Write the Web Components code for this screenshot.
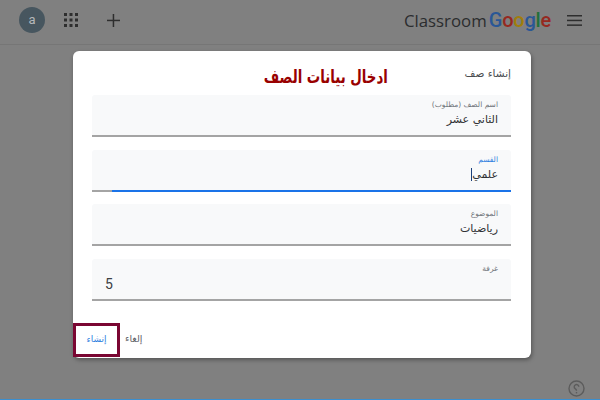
<!DOCTYPE html>
<html lang="ar">
<head>
<meta charset="utf-8">
<title>Classroom</title>
<style>
  html, body { margin: 0; height: 100%; }
  body { width: 600px; height: 400px; overflow: hidden; background: #808080; font-family: "DejaVu Sans", sans-serif; }
</style>
</head>
<body>
<class-page>
  <class-topbar slot="top"></class-topbar>
  <class-dialog heading="إنشاء صف" note="ادخال بيانات الصف">
    <class-field label="اسم الصف (مطلوب)" value="الثاني عشر"></class-field>
    <class-field label="القسم" value="علمي" focused></class-field>
    <class-field label="الموضوع" value="رياضيات"></class-field>
    <class-field label="غرفة" value="5" latin></class-field>
  </class-dialog>
</class-page>

<script>
class ClassPage extends HTMLElement {
    constructor() {
        super();
        this.attachShadow({ mode: 'open' });
        this.shadowRoot.innerHTML = `
        <style>
            :host { display: flex; flex-direction: column; width: 600px; height: 400px; position: relative; }
            .body { flex: 1; padding: 6px 69px 0 73px; }
            .help { position: absolute; right: 15px; bottom: 3px; width: 17px; height: 17px; }
            .strip { position: absolute; left: 0; right: 0; bottom: 0; height: 1px; background: #3a8fd0; }
        </style>
        <slot name="top"></slot>
        <div class="body"><slot></slot></div>
        <svg class="help" viewBox="0 0 17 17" fill="none" stroke="#5c5c5c" stroke-width="1.4">
            <circle cx="8.5" cy="8.5" r="7.5"/>
            <path d="M10.8 6.8a2.3 2.3 0 1 0-3.6 1.9c.8.5 1.3 1 1.3 2"/>
            <path d="M8.5 12v1.4"/>
        </svg>
        <div class="strip"></div>
        `;
    }
}

class ClassTopbar extends HTMLElement {
    constructor() {
        super();
        this.attachShadow({ mode: 'open' });
        this.shadowRoot.innerHTML = `
        <style>
            :host { display: flex; align-items: center; box-sizing: border-box; height: 45px; padding: 0 18px 4px 19px; border-bottom: 1px solid #767676; }
            .avatar { width: 26px; height: 26px; border-radius: 50%; background: #47565f; color: #b5b8ba; font: 13px/25px "Roboto", sans-serif; text-align: center; }
            .grid { margin-left: 19px; width: 14px; height: 14px; }
            .plus { margin-left: 28px; width: 15px; height: 15px; }
            .logo { margin-left: auto; display: flex; align-items: baseline; font-family: "Open Sans", sans-serif; }
            .classroom { font-size: 16.8px; color: #2b2c2e; }
            .google { margin-left: 2px; font-family: "Roboto", sans-serif; font-weight: 500; font-size: 20px; letter-spacing: -.2px; }
            .b { color: #2a5796; } .r { color: #96291f; } .y { color: #a07d0c; } .g { color: #22703a; }
            .menu { margin-left: 16px; width: 15px; height: 11px; }
        </style>
        <div class="avatar">a</div>
        <svg class="grid" viewBox="0 0 14 14" fill="#2e2e2e">
            <rect x="0" y="0" width="3" height="3"/><rect x="5.5" y="0" width="3" height="3"/><rect x="11" y="0" width="3" height="3"/>
            <rect x="0" y="5.5" width="3" height="3"/><rect x="5.5" y="5.5" width="3" height="3"/><rect x="11" y="5.5" width="3" height="3"/>
            <rect x="0" y="11" width="3" height="3"/><rect x="5.5" y="11" width="3" height="3"/><rect x="11" y="11" width="3" height="3"/>
        </svg>
        <svg class="plus" viewBox="0 0 15 15" fill="#2e2e2e"><rect x="6.7" y="1" width="1.5" height="13"/><rect x="1" y="6.7" width="13" height="1.5"/></svg>
        <div class="logo">
            <span class="classroom">Classroom</span>
            <span class="google"><span class="b">G</span><span class="r">o</span><span class="y">o</span><span class="b">g</span><span class="g">l</span><span class="r">e</span></span>
        </div>
        <svg class="menu" viewBox="0 0 15 11" fill="#2e2e2e"><rect y="0" width="15" height="1.5"/><rect y="4.7" width="15" height="1.5"/><rect y="9.4" width="15" height="1.5"/></svg>
        `;
    }
}

class ClassDialog extends HTMLElement {
    constructor() {
        super();
        this.attachShadow({ mode: 'open' });
        this.shadowRoot.innerHTML = `
        <style>
            :host { display: flex; flex-direction: column; box-sizing: border-box; position: relative; width: 458px; height: 307px; background: #fff; border-radius: 6px; box-shadow: 1px 2px 4px rgba(0,0,0,.35); padding: 0 20px 0 19px; }
            .head { display: flex; align-items: center; justify-content: flex-end; gap: 77px; height: 44px; }
            .heading { font-size: 10.5px; color: #4a4d50; direction: rtl; }
            .note { font: bold 18px "DejaVu Sans", sans-serif; color: #990000; direction: rtl; transform: scaleX(.74); transform-origin: right center; margin-top: 6px; }
            .fields { display: flex; flex-direction: column; gap: 12.5px; }
            .actions { margin-top: auto; margin-bottom: 1px; height: 34px; display: flex; align-items: center; margin-left: -19px; }
            .create { box-sizing: border-box; width: 47px; height: 34px; padding-bottom: 3px; border: 3px solid #7a0632; color: #2f7fe0; font-size: 9px; display: flex; align-items: center; justify-content: center; }
            .cancel { margin-left: 5px; color: #5f6368; font-size: 9.5px; margin-bottom: 4px; }
        </style>
        <div class="head">
            <span class="note"></span>
            <span class="heading"></span>
        </div>
        <div class="fields"><slot></slot></div>
        <div class="actions">
            <span class="create">إنشاء</span>
            <span class="cancel">إلغاء</span>
        </div>
        `;
    }
    connectedCallback() {
        this.shadowRoot.querySelector('.heading').textContent = this.getAttribute('heading');
        this.shadowRoot.querySelector('.note').textContent = this.getAttribute('note');
    }
}

class ClassField extends HTMLElement {
    constructor() {
        super();
        this.attachShadow({ mode: 'open' });
        this.shadowRoot.innerHTML = `
        <style>
            :host { display: block; box-sizing: border-box; position: relative; height: 42px; background: #f8f9fa; border-bottom: 2px solid #a4a4a4; border-radius: 3px 3px 0 0; padding: 5px 13px 0 13px; direction: rtl; }
            .label { font-size: 7.5px; line-height: 10px; color: #70757a; }
            .value { font-size: 11px; line-height: 18px; color: #303134; margin-top: 1px; }
            :host([latin]) .value { direction: ltr; font-family: "Roboto", sans-serif; font-size: 14px; color: #3c4043; }
            :host([focused]) .label { color: #2f7fe0; }
            :host([focused]) .value span { border-left: 1px solid #1a3f7a; }
            :host([focused])::after { content: ""; position: absolute; left: 20px; right: 0; bottom: -2px; height: 2px; background: #1a73e8; }
        </style>
        <div class="label"></div>
        <div class="value"><span></span></div>
        `;
    }
    connectedCallback() {
        this.shadowRoot.querySelector('.label').textContent = this.getAttribute('label');
        this.shadowRoot.querySelector('.value span').textContent = this.getAttribute('value');
    }
}

customElements.define('class-page', ClassPage);
customElements.define('class-topbar', ClassTopbar);
customElements.define('class-dialog', ClassDialog);
customElements.define('class-field', ClassField);
</script>
</body>
</html>
